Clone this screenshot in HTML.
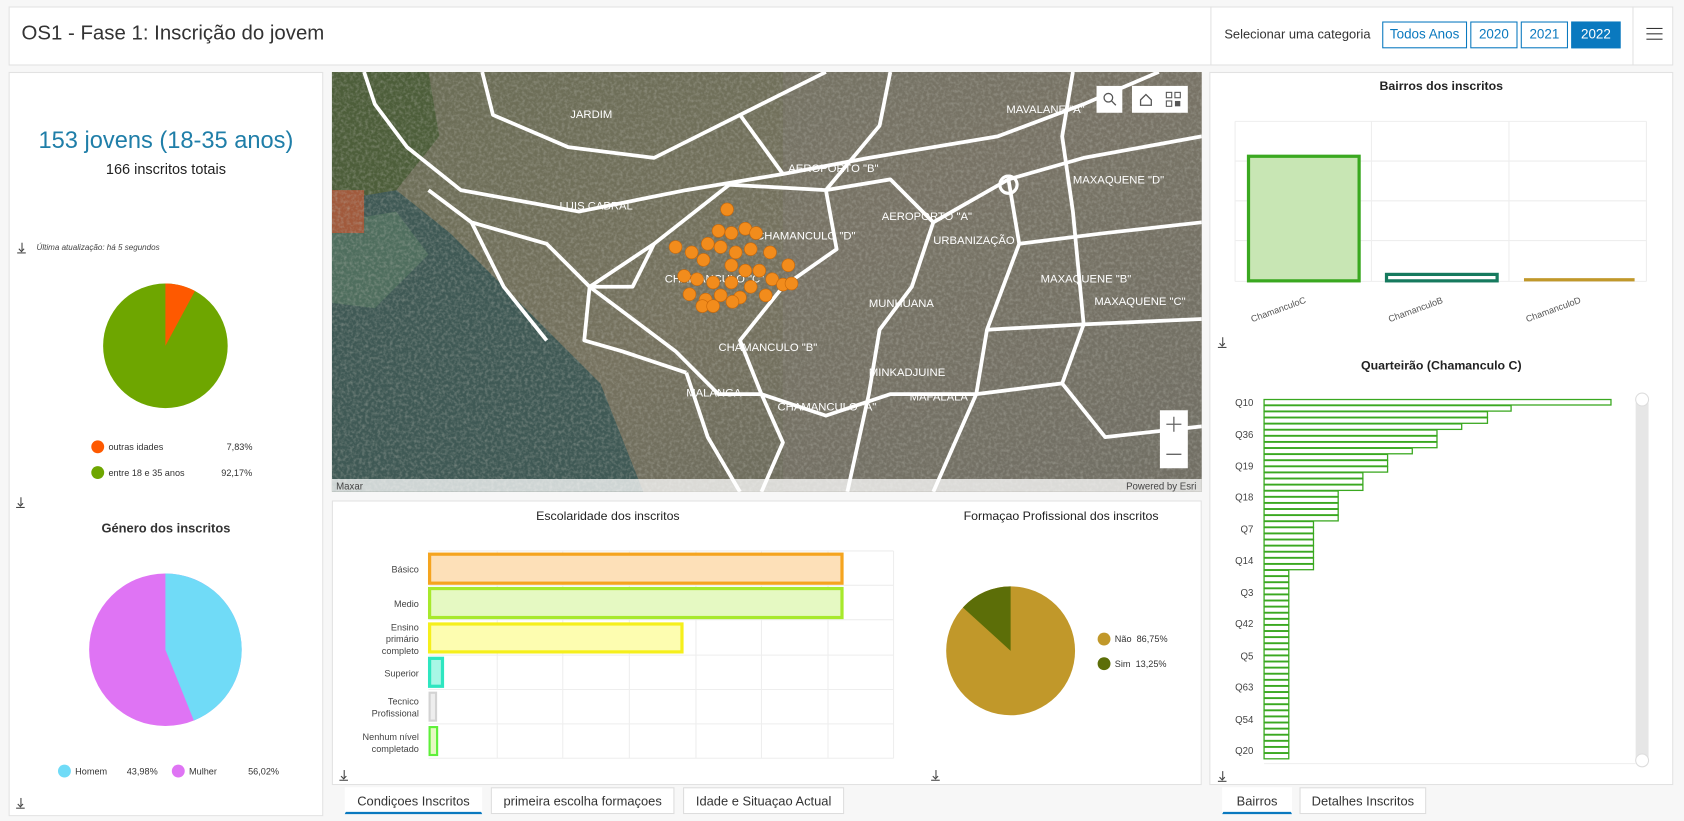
<!DOCTYPE html>
<html><head><meta charset="utf-8">
<style>
*{box-sizing:border-box;margin:0;padding:0}
html,body{width:1684px;height:820px;overflow:hidden;background:#f4f4f4;font-family:"Liberation Sans",sans-serif;color:#333}
#w{position:absolute;left:0;top:0;width:1568px;height:764px;transform:scale(1.07398);transform-origin:0 0;background:#f7f7f7}
.p{position:absolute;background:#fff;border:1px solid #e2e2e2}
.a{position:absolute}
.t{position:absolute;white-space:nowrap}
.dl{position:absolute;font-size:11px;color:#444;width:8px;height:10px;border-bottom:1px solid #444}
.dl:before{content:"";position:absolute;left:3.5px;top:0;width:1px;height:8px;background:#444}
.dl:after{content:"";position:absolute;left:1.5px;top:4px;width:3px;height:3px;border-right:1px solid #444;border-bottom:1px solid #444;transform:rotate(45deg)}
.btn{position:absolute;top:20px;height:25px;border:1px solid #0a79bf;color:#0a79bf;font-size:12.5px;text-align:center;line-height:23px;background:#fff}
.tab{position:absolute;top:733px;height:25px;background:#fff;border:1px solid #ddd;font-size:12px;text-align:center;line-height:24px;color:#333}
.lab{position:absolute;font-size:8.5px;color:#444;text-align:right;line-height:11px}
</style></head><body><div id="w">
<!-- header -->
<div class="p" style="left:8px;top:6px;width:1550px;height:55px"></div>
<div class="t" style="left:20px;top:21px;font-size:19px;color:#333">OS1 - Fase 1: Inscrição do jovem</div>
<div class="a" style="left:1127px;top:6px;width:1px;height:55px;background:#e2e2e2"></div>
<div class="t" style="left:1140px;top:25px;font-size:12px;color:#333">Selecionar uma categoria</div>
<div class="btn" style="left:1287px;width:79px">Todos Anos</div>
<div class="btn" style="left:1369px;width:44px">2020</div>
<div class="btn" style="left:1416px;width:44px">2021</div>
<div class="btn" style="left:1463px;width:46px;background:#0a79bf;color:#fff">2022</div>
<div class="a" style="left:1520px;top:6px;width:1px;height:55px;background:#e2e2e2"></div>
<div class="a" style="left:1533px;top:26px;width:15px;height:1px;background:#333;box-shadow:0 5px 0 #333,0 10px 0 #333"></div>

<!-- left panel -->
<div class="p" style="left:8px;top:67px;width:293px;height:693px"></div>
<div class="t" style="left:8px;width:293px;text-align:center;top:118px;font-size:22px;color:#1f7ea8">153 jovens (18-35 anos)</div>
<div class="t" style="left:8px;width:293px;text-align:center;top:150px;font-size:13.5px;color:#222">166 inscritos totais</div>
<div class="dl" style="left:16px;top:226px"></div>
<div class="t" style="left:34px;top:226px;font-size:7.5px;font-style:italic;color:#444">Última atualização: há 5 segundos</div>
<svg class="a" style="left:0;top:0" width="310" height="764">
<circle cx="154" cy="322" r="58" fill="#6ea600"/>
<path d="M154 322 L154 264 A58 58 0 0 1 181.5 271 Z" fill="#fe5900"/>
<circle cx="91" cy="416" r="6" fill="#fe5900"/><circle cx="91" cy="440" r="6" fill="#6ea600"/>
<circle cx="154" cy="605" r="71" fill="#df74f4"/>
<path d="M154 605 L154 534 A71 71 0 0 1 180.5 670.9 Z" fill="#70dbf7"/>
<circle cx="60" cy="718" r="6" fill="#70dbf7"/><circle cx="166" cy="718" r="6" fill="#df74f4"/>
</svg>
<div class="t" style="left:101px;top:411px;font-size:8.5px">outras idades</div>
<div class="t" style="left:211px;top:411px;font-size:8.5px">7,83%</div>
<div class="t" style="left:101px;top:435px;font-size:8.5px">entre 18 e 35 anos</div>
<div class="t" style="left:206px;top:435px;font-size:8.5px">92,17%</div>
<div class="dl" style="left:15px;top:463px"></div>
<div class="t" style="left:8px;width:293px;text-align:center;top:485px;font-size:12px;font-weight:bold;color:#333">Género dos inscritos</div>
<div class="t" style="left:70px;top:713px;font-size:8.5px">Homem</div>
<div class="t" style="left:118px;top:713px;font-size:8.5px">43,98%</div>
<div class="t" style="left:176px;top:713px;font-size:8.5px">Mulher</div>
<div class="t" style="left:231px;top:713px;font-size:8.5px">56,02%</div>
<div class="dl" style="left:15px;top:743px"></div>

<!-- map -->
<svg class="a" style="left:309px;top:67px" width="810" height="391" viewBox="0 0 810 391">
<defs><linearGradient id="g" x1="0" y1="0" x2="1" y2="1"><stop offset="0" stop-color="#6a6d55"/><stop offset="0.5" stop-color="#76725f"/><stop offset="1" stop-color="#65675b"/></linearGradient>
<filter id="n"><feTurbulence type="fractalNoise" baseFrequency="0.35" numOctaves="2" seed="3"/><feColorMatrix values="0 0 0 0 0.5  0 0 0 0 0.5  0 0 0 0 0.45  0 0 0 1.4 -0.55"/></filter></defs>
<rect width="810" height="391" fill="url(#g)"/>
<rect x="420" y="0" width="390" height="391" fill="#7a756b" opacity="0.6"/>
<path d="M0 120 L60 110 L110 150 L150 190 L200 240 L250 290 L290 391 L0 391 Z" fill="#3f5955"/>
<path d="M0 0 L90 0 L100 60 L60 110 L0 120 Z" fill="#4d5e3a"/>
<path d="M0 140 L60 130 L90 170 L40 220 L0 215 Z" fill="#4f6e5e"/>
<rect x="0" y="110" width="30" height="40" fill="#a15a3c"/>
<rect width="810" height="391" filter="url(#n)" opacity="0.55"/>
<g fill="none" stroke="#fff" stroke-width="3.5" stroke-linejoin="round">
<path d="M30 0 L40 30 L70 70 L120 110 L230 130 L330 110 L420 95 L500 80 L620 60 L700 30 L770 0"/>
<path d="M90 110 L130 140 L200 160 L240 200 L300 160 L370 105 L460 110 L470 165 L420 200 L380 250 L400 300 L420 345 L400 391"/>
<path d="M300 160 L280 200 L240 200 L320 260 L360 300 L400 300"/>
<path d="M240 200 L235 250 L270 260 L330 280"/>
<path d="M140 0 L150 40 L220 70 L300 80 L380 40 L460 0"/>
<path d="M460 110 L520 100 L560 140 L540 200 L510 240 L500 300 L480 391"/>
<path d="M560 140 L630 100 L640 160 L610 240 L600 300 L560 391"/>
<path d="M630 100 L700 80 L810 60"/>
<path d="M640 160 L720 150 L810 140"/>
<path d="M610 240 L700 235 L810 230"/>
<path d="M600 300 L680 290 L720 340 L810 330"/>
<path d="M690 0 L680 60 L690 130 L700 235 L680 290"/>
<path d="M400 300 L460 320 L520 300 L600 300"/>
<path d="M330 280 L350 340 L380 391"/>
<path d="M520 0 L510 50 L460 110"/>
<path d="M380 40 L420 95"/>
<path d="M130 140 L160 200 L200 250"/>
</g>
<circle cx="630" cy="105" r="8" fill="none" stroke="#fff" stroke-width="3"/>
<g fill="#fff" font-size="10.5" font-family="Liberation Sans">
<text x="222" y="43">JARDIM</text><text x="212" y="128">LUIS CABRAL</text>
<text x="425" y="93">AEROPORTO "B"</text><text x="512" y="138">AEROPORTO "A"</text>
<text x="395" y="156">CHAMANCULO "D"</text><text x="560" y="160">URBANIZAÇÃO</text>
<text x="310" y="196">CHAMANCULO "C"</text><text x="660" y="196">MAXAQUENE "B"</text>
<text x="500" y="219">MUNHUANA</text><text x="710" y="217">MAXAQUENE "C"</text>
<text x="360" y="260">CHAMANCULO "B"</text><text x="500" y="283">MINKADJUINE</text>
<text x="330" y="302">MALANGA</text><text x="415" y="315">CHAMANCULO "A"</text>
<text x="538" y="306">MAFALALA</text><text x="628" y="38">MAVALANE "A"</text>
<text x="690" y="104">MAXAQUENE "D"</text>
</g>
<g fill="#f28c1c" stroke="#c9680a" stroke-width="0.6">
<circle cx="368" cy="128" r="6"/><circle cx="360" cy="148" r="6"/><circle cx="372" cy="150" r="6"/><circle cx="385" cy="146" r="6"/><circle cx="395" cy="150" r="6"/>
<circle cx="350" cy="160" r="6"/><circle cx="362" cy="163" r="6"/><circle cx="376" cy="168" r="6"/><circle cx="390" cy="165" r="6"/><circle cx="408" cy="168" r="6"/>
<circle cx="320" cy="163" r="6"/><circle cx="335" cy="168" r="6"/><circle cx="346" cy="175" r="6"/><circle cx="372" cy="180" r="6"/><circle cx="385" cy="185" r="6"/><circle cx="398" cy="185" r="6"/><circle cx="425" cy="180" r="6"/>
<circle cx="328" cy="190" r="6"/><circle cx="340" cy="193" r="6"/><circle cx="355" cy="196" r="6"/><circle cx="372" cy="196" r="6"/><circle cx="390" cy="200" r="6"/><circle cx="410" cy="193" r="6"/><circle cx="420" cy="198" r="6"/><circle cx="428" cy="197" r="6"/>
<circle cx="333" cy="207" r="6"/><circle cx="348" cy="212" r="6"/><circle cx="362" cy="208" r="6"/><circle cx="380" cy="210" r="6"/><circle cx="404" cy="208" r="6"/><circle cx="345" cy="218" r="6"/><circle cx="355" cy="218" r="6"/><circle cx="373" cy="214" r="6"/>
</g>
<rect x="0" y="379" width="810" height="12" fill="#fff" opacity="0.75"/>
<text x="4" y="389" font-size="9" fill="#444" font-family="Liberation Sans">Maxar</text>
<text x="805" y="389" font-size="9" fill="#444" text-anchor="end" font-family="Liberation Sans">Powered by Esri</text>
<rect x="712" y="13" width="24" height="25" fill="#fff"/><rect x="745" y="13" width="52" height="25" fill="#fff"/>
<circle cx="723" cy="24" r="4" fill="none" stroke="#555" stroke-width="1.2"/><path d="M726 27 L730 31" stroke="#555" stroke-width="1.2"/>
<path d="M753 26 L758 21 L763 26 L763 31 L753 31 Z" fill="none" stroke="#555" stroke-width="1.2"/>
<rect x="777" y="19" width="5" height="5" fill="none" stroke="#555"/><rect x="785" y="19" width="5" height="5" fill="none" stroke="#555"/><rect x="777" y="27" width="5" height="5" fill="none" stroke="#555"/><rect x="785" y="27" width="5" height="5" fill="#555"/>
<rect x="771" y="315" width="26" height="54" fill="#fff"/><path d="M777 328 H791 M784 321 V335 M777 356 H791" stroke="#666" stroke-width="1.2"/>
</svg>

<!-- bottom middle -->
<div class="p" style="left:309px;top:466px;width:810px;height:265px"></div>
<div class="t" style="left:399px;width:334px;text-align:center;top:475px;font-size:11.5px;color:#222">Escolaridade dos inscritos</div>
<div class="t" style="left:860px;width:256px;text-align:center;top:475px;font-size:11.5px;color:#222">Formaçao Profissional dos inscritos</div>
<svg class="a" style="left:0;top:0" width="1120" height="764">
<g stroke="#eee" stroke-width="1">
<path d="M463 513V706M524 513V706M586 513V706M648 513V706M709 513V706M771 513V706M832 513V706M399 513H832M399 545H832M399 577H832M399 610H832M399 642H832M399 674H832M399 706H832"/>
</g>
<rect x="400" y="516" width="384" height="27" fill="#fde0b8" stroke="#f5a41f" stroke-width="3"/>
<rect x="400" y="548" width="384" height="27" fill="#e5f9c2" stroke="#a7e92c" stroke-width="3"/>
<rect x="400" y="581" width="235" height="26" fill="#fdfdb0" stroke="#f5ef1c" stroke-width="3"/>
<rect x="400" y="613" width="12" height="26" fill="#a8f7e6" stroke="#2ee6c0" stroke-width="3"/>
<rect x="400" y="645" width="6" height="26" fill="#eee" stroke="#d3d3d3" stroke-width="2"/>
<rect x="400" y="677" width="7" height="26" fill="#e5f9c2" stroke="#5ef03a" stroke-width="2"/>
<circle cx="941" cy="606" r="60" fill="#c1982a"/>
<path d="M941 606 L941 546 A60 60 0 0 0 896.6 565.6 Z" fill="#5c6e08"/>
<circle cx="1028" cy="595" r="6" fill="#c1982a"/><circle cx="1028" cy="618" r="6" fill="#5c6e08"/>
</svg>
<div class="lab" style="left:330px;width:60px;top:525px">Básico</div>
<div class="lab" style="left:330px;width:60px;top:557px">Medio</div>
<div class="lab" style="left:330px;width:60px;top:579px">Ensino<br>primário<br>completo</div>
<div class="lab" style="left:330px;width:60px;top:622px">Superior</div>
<div class="lab" style="left:330px;width:60px;top:648px">Tecnico<br>Profissional</div>
<div class="lab" style="left:320px;width:70px;top:681px">Nenhum nível<br>completado</div>
<div class="t" style="left:1038px;top:590px;font-size:8.5px">Não&nbsp; 86,75%</div>
<div class="t" style="left:1038px;top:613px;font-size:8.5px">Sim&nbsp; 13,25%</div>
<div class="dl" style="left:316px;top:717px"></div>
<div class="dl" style="left:867px;top:717px"></div>
<div class="tab" style="left:321px;width:128px;border-color:transparent;border-bottom:2px solid #0a79bf">Condiçoes Inscritos</div>
<div class="tab" style="left:457px;width:171px">primeira escolha formaçoes</div>
<div class="tab" style="left:636px;width:150px">Idade e Situaçao Actual</div>

<!-- right panel -->
<div class="p" style="left:1126px;top:67px;width:432px;height:664px"></div>
<div class="t" style="left:1126px;width:432px;text-align:center;top:75px;font-size:11.5px;font-weight:bold;color:#222">Bairros dos inscritos</div>
<div class="t" style="left:1126px;width:432px;text-align:center;top:335px;font-size:11.5px;font-weight:bold;color:#222">Quarteirão (Chamanculo C)</div>
<svg class="a" style="left:1126px;top:67px" width="432" height="664">
<g stroke="#eee"><path d="M24 46H407M24 83H407M24 120H407M24 157H407M24 195H407M24 46V195M151 46V195M279 46V195M407 46V195"/></g>
<rect x="36.5" y="78.5" width="103" height="116" fill="#c8e6b4" stroke="#3aa820" stroke-width="3"/>
<rect x="165" y="188.5" width="103" height="6" fill="#fff" stroke="#167a5e" stroke-width="3"/>
<rect x="293" y="192" width="103" height="3" fill="#c1982a"/>
<g font-size="8.5" fill="#555" font-family="Liberation Sans">
<text transform="translate(40 233) rotate(-20)">ChamanculoC</text>
<text transform="translate(168 233) rotate(-20)">ChamanculoB</text>
<text transform="translate(296 233) rotate(-20)">ChamanculoD</text>
</g>
<rect x="397" y="303" width="12" height="342" rx="6" fill="#e6e6e6"/>
<circle cx="403" cy="305" r="6" fill="#fff" stroke="#ddd"/><circle cx="403" cy="641" r="6" fill="#fff" stroke="#ddd"/>
<path d="M51 644H397" stroke="#eee"/>
<g fill="#fff" stroke="#3aa820" stroke-width="1.2" id="qb"></g>
<g font-size="9" fill="#444" font-family="Liberation Sans" text-anchor="end">
<text x="41" y="311">Q10</text><text x="41" y="341">Q36</text><text x="41" y="370">Q19</text><text x="41" y="399">Q18</text><text x="41" y="429">Q7</text><text x="41" y="458">Q14</text><text x="41" y="488">Q3</text><text x="41" y="517">Q42</text><text x="41" y="547">Q5</text><text x="41" y="576">Q63</text><text x="41" y="606">Q54</text><text x="41" y="635">Q20</text>
</g>
</svg>
<div class="dl" style="left:1134px;top:314px"></div>
<div class="dl" style="left:1134px;top:718px"></div>
<div class="tab" style="left:1138px;width:65px;border-color:transparent;border-bottom:2px solid #0a79bf">Bairros</div>
<div class="tab" style="left:1210px;width:118px">Detalhes Inscritos</div>
</div>
<script>
var L=[323,230,208,208,184,161,161,161,138,115,115,115,92,92,92,69,69,69,69,69,46,46,46,46,46,46,46,46];
while(L.length<59)L.push(23);
var g=document.getElementById('qb'),s='';
for(var i=0;i<59;i++){s+='<rect x="51" y="'+(305+i*5.68).toFixed(2)+'" width="'+L[i]+'" height="5.1"/>';}
g.innerHTML=s;
</script>
</body></html>
